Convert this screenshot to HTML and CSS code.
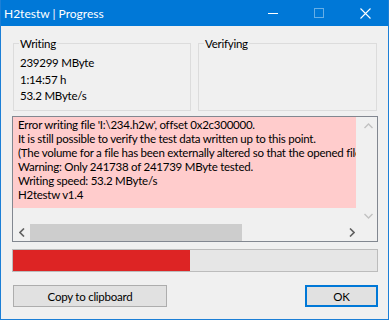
FILE: index.html
```html
<!DOCTYPE html>
<html>
<head>
<meta charset="utf-8">
<link rel="stylesheet" href="styles.css">
</head>
<body>
<div class="window">
  <div class="titlebar">
    <span class="title">H2testw | Progress</span>
    <div class="controls">
      <div class="ctl"><svg width="10" height="10" viewBox="0 0 10 10"><path d="M0 5.5h10" stroke="#fff" stroke-width="1"/></svg></div>
      <div class="ctl"><svg width="10" height="10" viewBox="0 0 10 10"><rect x="0.5" y="0.5" width="9" height="9" fill="none" stroke="#66aee6" stroke-width="1"/></svg></div>
      <div class="ctl"><svg width="11" height="11" viewBox="0 0 11 11"><path d="M0.5 0.5l10 10M10.5 0.5l-10 10" stroke="#fff" stroke-width="1.1"/></svg></div>
    </div>
  </div>
  <div class="client">
    <div class="groups">
      <fieldset class="group group-write">
        <legend>Writing</legend>
        <div class="stats">
          <div>239299 MByte</div>
          <div>1:14:57 h</div>
          <div>53.2 MByte/s</div>
        </div>
      </fieldset>
      <fieldset class="group group-verify">
        <legend>Verifying</legend>
      </fieldset>
    </div>
    <div class="log">
      <div class="log-top">
        <div class="log-text">
          <div>Error writing file 'I:\234.h2w', offset 0x2c300000.</div>
          <div>It is still possible to verify the test data written up to this point.</div>
          <div>(The volume for a file has been externally altered so that the opened file is no longer valid.)</div>
          <div>Warning: Only 241738 of 241739 MByte tested.</div>
          <div>Writing speed: 53.2 MByte/s</div>
          <div>H2testw v1.4</div>
        </div>
        <div class="gap"></div>
        <div class="vscroll">
          <div class="sb-btn"><svg width="9" height="6" viewBox="0 0 9 6"><path d="M0.5 5l4-4 4 4" fill="none" stroke="#c2c2c2" stroke-width="1.4"/></svg></div>
          <div class="sb-track"></div>
          <div class="sb-btn"><svg width="9" height="6" viewBox="0 0 9 6"><path d="M0.5 1l4 4 4-4" fill="none" stroke="#c2c2c2" stroke-width="1.4"/></svg></div>
        </div>
      </div>
      <div class="hscroll">
        <div class="sb-btn"><svg width="6" height="9" viewBox="0 0 6 9"><path d="M5 0.5l-4 4 4 4" fill="none" stroke="#606060" stroke-width="1.6"/></svg></div>
        <div class="h-track"><div class="h-thumb"></div></div>
        <div class="sb-btn"><svg width="6" height="9" viewBox="0 0 6 9"><path d="M1 0.5l4 4-4 4" fill="none" stroke="#606060" stroke-width="1.6"/></svg></div>
        <div class="corner"></div>
      </div>
    </div>
    <div class="progress"><div class="fill" style="width:48.6%"></div></div>
    <div class="buttons">
      <button class="btn btn-copy">Copy to clipboard</button>
      <button class="btn btn-ok">OK</button>
    </div>
  </div>
</div>
</body>
</html>
```
FILE: styles.css
```css
* { box-sizing: border-box; }
html, body { margin: 0; padding: 0; }
body {
  font-family: Lato, "Noto Sans", sans-serif;
  font-size: 11.5px;
  letter-spacing: -0.25px;
  color: #000;
  background: #f0f0f0;
}
.window {
  width: 389px;
  height: 320px;
  border: 1px solid #1c7fd6;
  border-top: 0;
  background: #f0f0f0;
  display: flex;
  flex-direction: column;
}
.titlebar {
  height: 26px;
  background: #0078d7;
  color: #fff;
  display: flex;
  align-items: center;
  flex: none;
}
.title {
  flex: 1;
  padding-left: 3px;
  font-size: 12px;
  letter-spacing: 0;
  padding-top: 1px;
}
.controls { display: flex; }
.ctl {
  width: 46px;
  height: 26px;
  display: flex;
  align-items: center;
  justify-content: center;
}
.client {
  flex: 1;
  padding: 10px 10px 0 11px;
  display: flex;
  flex-direction: column;
}
.groups {
  display: flex;
  gap: 7px;
  margin-left: 1px;
  margin-right: 1px;
  height: 75px;
}
.group {
  margin: 0;
  padding: 0 6px;
  border: 1px solid #dcdcdc;
  min-width: 0;
  height: 75px;
}
.group-write { width: 178px; }
.group-verify { flex: 1; }
.group legend {
  padding: 0 1px;
  margin-left: -1px;
  line-height: 15px;
}
.stats {
  padding-top: 4px;
  line-height: 16.5px;
}
.log {
  margin-top: 5px;
  height: 126px;
  border: 1px solid #828790;
  background: #f0f0f0;
  display: flex;
  flex-direction: column;
}
.log-top {
  display: flex;
  height: 107px;
}
.log-text {
  width: 343px;
  height: 91px;
  background: #ffcccc;
  padding: 1px 0 0 5px;
  line-height: 14px;
  white-space: nowrap;
  overflow: hidden;
}
.gap { width: 4px; }
.vscroll {
  width: 17px;
  display: flex;
  flex-direction: column;
}
.sb-btn {
  width: 17px;
  height: 17px;
  flex: none;
  display: flex;
  align-items: center;
  justify-content: center;
}
.sb-track { flex: 1; }
.hscroll {
  height: 17px;
  display: flex;
}
.h-track {
  flex: 1;
  display: flex;
}
.h-thumb {
  width: 212px;
  height: 17px;
  background: #cdcdcd;
}
.corner { width: 17px; }
.progress {
  margin-top: 7px;
  height: 23px;
  border: 1px solid #bcbcbc;
  background: #e6e6e6;
  display: flex;
}
.fill { background: #dd2424; height: 100%; }
.buttons {
  margin-top: 13px;
  display: flex;
  justify-content: space-between;
  padding-left: 1px;
}
.btn {
  font-family: Lato, "Noto Sans", sans-serif;
  font-size: 11.5px;
  letter-spacing: -0.25px;
  color: #000;
  height: 22px;
  background: #e1e1e1;
  border: 1px solid #adadad;
  padding: 0;
  margin: 0;
}
.btn-copy { width: 154px; }
.btn-ok { width: 73px; border: 2px solid #0078d7; }
```
